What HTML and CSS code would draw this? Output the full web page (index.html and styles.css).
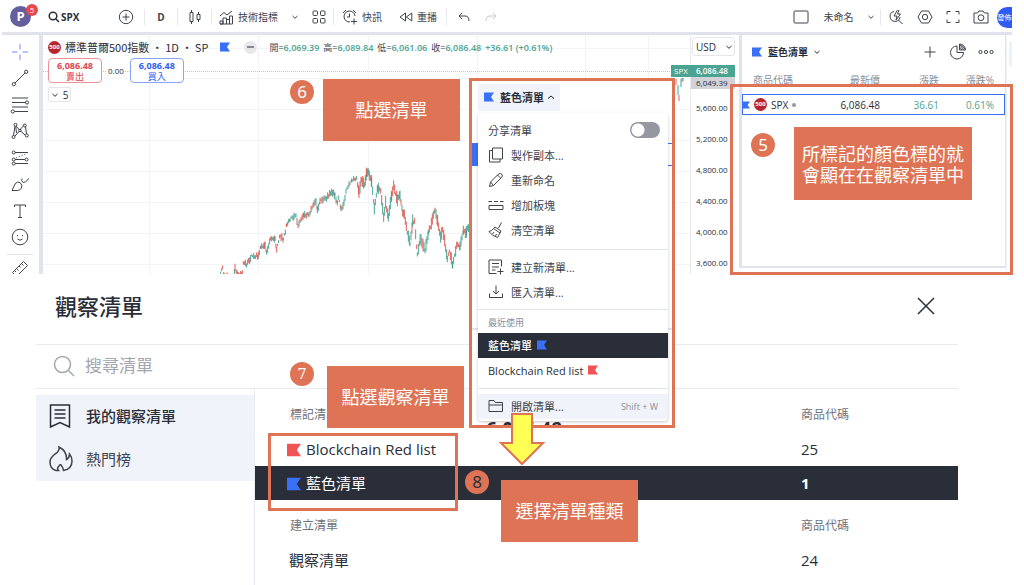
FILE: index.html
```html
<!DOCTYPE html>
<html lang="zh-Hant">
<head>
<meta charset="utf-8">
<title>觀察清單</title>
<link rel="stylesheet" href="styles.css">
</head>
<body>
<svg class="defs" aria-hidden="true">
  <symbol id="flag" viewBox="0 0 10 10"><path d="M0 0.500H10L7 5L10 9.500H0Z" fill="currentColor"/></symbol>
  <symbol id="down" viewBox="0 0 8 8"><path d="M1.500 3L4 5.300L6.500 3" class="ln"/></symbol>
</svg>
<main class="board">
  <section class="app">
    <header class="toolbar">
      <div class="profile"><span class="avatar">P</span><span class="badge">5</span></div>
      <button class="tool symbol"><svg width="12" height="12" viewBox="0 0 12 12"><circle cx="5" cy="5" r="3.800" class="ln bold"/><path d="M8 8L11 11" class="ln bold"/></svg>SPX</button>
      <button class="tool" aria-label="比較"><svg width="16" height="16" viewBox="0 0 16 16"><circle cx="8" cy="8" r="6.700" class="ln"/><path d="M8 4.500V11.500M4.500 8H11.500" class="ln"/></svg></button>
      <button class="tool split strong">D</button>
      <button class="tool split" aria-label="K線"><svg width="14" height="16" viewBox="0 0 14 16"><path d="M2 3.500H5V12.500H2ZM3.500 1V3.500M3.500 12.500V15M9 5.500H12V10.500H9ZM10.500 3V5.500M10.500 10.500V13" class="ln"/></svg></button>
      <button class="tool split"><svg width="15" height="15" viewBox="0 0 15 15"><path d="M1 6L5 2.500L8 5L13 1M1 14V11H4V14ZM4 14V8H7.500V14M7.500 14V9.500H10.500V14M10.500 14V6H13.500V14H1" class="ln"/></svg>技術指標</button>
      <button class="tool" aria-label="更多指標"><svg width="8" height="8"><use href="#down"/></svg></button>
      <button class="tool" aria-label="版面"><svg width="14" height="14" viewBox="0 0 14 14"><rect x="1" y="1" width="4.500" height="4.500" rx="1" class="ln"/><rect x="8.500" y="1" width="4.500" height="4.500" rx="1" class="ln"/><rect x="1" y="8.500" width="4.500" height="4.500" rx="1" class="ln"/><rect x="8.500" y="8.500" width="4.500" height="4.500" rx="1" class="ln"/></svg></button>
      <button class="tool split"><svg width="16" height="16" viewBox="0 0 16 16"><path d="M13 7A5.500 5.500 0 1 0 8 13M7.500 4.500V8H5M1 4L4 1M11 1L14 4M12 9.500V15.500M9 12.500H15" class="ln"/></svg>快訊</button>
      <button class="tool"><svg width="14" height="12" viewBox="0 0 14 12"><path d="M6.500 2V10L1 6ZM12.800 2V10L7.300 6Z" class="ln"/></svg>重播</button>
      <button class="tool split" aria-label="復原"><svg width="12" height="10" viewBox="0 0 12 10"><path d="M4 1L1 4L4 7M1 4H7Q11 4 11 9" class="ln"/></svg></button>
      <button class="tool faint" aria-label="重做"><svg width="12" height="10" viewBox="0 0 12 10"><path d="M8 1L11 4L8 7M11 4H5Q1 4 1 9" class="ln"/></svg></button>
      <span></span>
      <button class="tool" aria-label="佈局"><svg width="16" height="14" viewBox="0 0 16 14"><rect x="1" y="1" width="14" height="12" rx="1" class="ln"/></svg></button>
      <button class="tool">未命名</button>
      <button class="tool" aria-label="佈局選單"><svg width="8" height="8"><use href="#down"/></svg></button>
      <button class="tool split" aria-label="快速搜尋"><svg width="16" height="16" viewBox="0 0 16 16"><path d="M6 2.500A5 5 0 1 0 12 8M10.500 11L14.500 15M9.500 1L6 7H9L8 11L12.500 5H9.500L11 1" class="ln"/></svg></button>
      <button class="tool" aria-label="設定"><svg width="16" height="16" viewBox="0 0 16 16"><path d="M4.500 2H11.500L15 8L11.500 14H4.500L1 8Z" class="ln"/><circle cx="8" cy="8" r="2.700" class="ln"/></svg></button>
      <button class="tool" aria-label="全螢幕"><svg width="14" height="14" viewBox="0 0 14 14"><path d="M1 4.500V1.500H4.500M9.500 1.500H13V4.500M13 9.500V12.500H9.500M4.500 12.500H1V9.500" class="ln"/></svg></button>
      <button class="tool" aria-label="快照"><svg width="16" height="14" viewBox="0 0 16 14"><path d="M1 3H4.500L6 1H10L11.500 3H15V13H1Z" class="ln"/><circle cx="8" cy="7.700" r="2.900" class="ln"/></svg></button>
      <button class="publish">發佈</button>
    </header>

    <div class="workspace">
      <nav class="rail" aria-label="繪圖工具">
        <div class="rail-tools">
          <button class="tool cross" aria-label="十字"><svg width="18" height="18" viewBox="0 0 18 18"><path d="M9 1V6.500M9 11.500V17M1 9H6.500M11.500 9H17" class="ln"/></svg></button>
          <button class="tool" aria-label="趨勢線"><svg width="18" height="18" viewBox="0 0 18 18"><path d="M4 14L14 4" class="ln"/><circle cx="2.800" cy="15.200" r="1.600" class="ln"/><circle cx="15.200" cy="2.800" r="1.600" class="ln"/></svg></button>
          <button class="tool" aria-label="斐波那契"><svg width="20" height="18" viewBox="0 0 20 18"><path d="M2 2H18M2 6.500H15.500M2 11H18M4.500 15.500H18" class="ln"/><circle cx="17" cy="6.500" r="1.600" class="ln"/><circle cx="2.800" cy="15.500" r="1.600" class="ln"/></svg></button>
          <button class="tool" aria-label="型態"><svg width="18" height="18" viewBox="0 0 18 18"><path d="M2.500 13.500L4 4M5 4L8.500 8L13 3.500M4 14L8.500 9M9.500 9L14 13M14.500 4.500L15.500 12M4.800 5L5.500 11" class="ln"/><circle cx="4.500" cy="2.800" r="1.500" class="ln"/><circle cx="13.800" cy="3.500" r="1.500" class="ln"/><circle cx="2.500" cy="15" r="1.500" class="ln"/><circle cx="15.800" cy="13.500" r="1.500" class="ln"/><circle cx="9" cy="8.500" r="1.200" class="ln"/></svg></button>
          <button class="tool" aria-label="預測"><svg width="18" height="18" viewBox="0 0 18 18"><path d="M4 3.500H17M4 10.500H14M4 14.500H17" class="ln"/><path d="M5 9L15 5" class="ln dots"/><circle cx="2.700" cy="3.500" r="1.500" class="ln"/><circle cx="2.700" cy="10.500" r="1.500" class="ln"/><circle cx="15.500" cy="10.500" r="1.500" class="ln"/><circle cx="2.700" cy="14.500" r="1.500" class="ln"/></svg></button>
          <button class="tool" aria-label="筆刷"><svg width="20" height="18" viewBox="0 0 20 18"><path d="M2 15.500L5 9Q7 6 10 7.500Q13 10 11.500 13Q10 15.500 7.500 15.500ZM12 3.500Q11 6 13 7.500Q15 8 19 3.500" class="ln"/></svg></button>
          <button class="tool" aria-label="文字"><svg width="18" height="18" viewBox="0 0 18 18"><path d="M3.500 5V3H14.500V5M9 3V15.500M7 15.500H11" class="ln"/></svg></button>
          <button class="tool" aria-label="圖示"><svg width="18" height="18" viewBox="0 0 18 18"><circle cx="9" cy="9" r="7.800" class="ln"/><path d="M6.500 7V8.200M11.500 7V8.200M6.500 11Q9 13.500 11.500 11" class="ln"/></svg></button>
        </div>
        <button class="tool ruler" aria-label="測量"><svg width="18" height="18" viewBox="0 0 18 18"><path d="M1.500 12.500L12.500 1.500L16.500 5.500L5.500 16.500ZM10.500 3.500L12.500 5.500M8 6L9.500 7.500M5.500 8.500L7.500 10.500M3.500 10.500L5 12" class="ln"/></svg></button>
      </nav>

      <section class="chart">
        <svg class="plot" id="plot" aria-hidden="true"></svg>
        <div class="pane">
          <div class="legend">
            <span class="logo">500</span>
            <h1 class="instrument">標準普爾500指數 · 1D · SP</h1>
            <svg class="blue" width="10" height="10"><use href="#flag"/></svg>
            <span class="market"></span>
            <div class="ohlc">
              <span>開=<b>6,069.39</b></span><span>高=<b>6,089.84</b></span><span>低=<b>6,061.06</b></span><span>收=<b>6,086.48</b></span><b>+36.61 (+0.61%)</b>
            </div>
          </div>
          <div class="orders">
            <button class="order sell"><b>6,086.48</b><span>賣出</span></button>
            <span class="spread">0.00</span>
            <button class="order buy"><b>6,086.48</b><span>買入</span></button>
          </div>
          <button class="collapse"><svg width="8" height="8"><use href="#down"/></svg>5</button>
        </div>
        <div class="scale">
          <button class="currency">USD<svg width="8" height="8"><use href="#down"/></svg></button>
          <div class="last"><span class="ticker">SPX</span>6,086.48</div>
          <div class="prev">6,049.39</div>
          <ul class="ticks"><li>5,600.00</li><li>5,200.00</li><li>4,800.00</li><li>4,400.00</li><li>4,000.00</li><li>3,600.00</li></ul>
        </div>
      </section>

      <section class="watchlist">
        <header class="watch-head">
          <svg class="blue" width="10" height="10"><use href="#flag"/></svg>
          <button class="watch-name">藍色清單<svg width="8" height="8"><use href="#down"/></svg></button>
          <button class="tool" aria-label="新增"><svg width="12" height="12" viewBox="0 0 12 12"><path d="M6 0.500V11.500M0.500 6H11.500" class="ln"/></svg></button>
          <button class="tool" aria-label="分析"><svg width="18" height="18" viewBox="0 0 18 18"><path d="M8 3A6.500 6.500 0 1 0 14.500 9.500H8ZM10.500 1V7H16.500A6 6 0 0 0 10.500 1ZM10.500 4L13 7M12 1.500L16 6M11 2L15 7" class="ln"/></svg></button>
          <button class="tool" aria-label="更多"><svg width="16" height="6" viewBox="0 0 16 6"><circle cx="2.500" cy="3" r="1.600" class="ln"/><circle cx="8" cy="3" r="1.600" class="ln"/><circle cx="13.500" cy="3" r="1.600" class="ln"/></svg></button>
        </header>
        <table class="quotes">
          <thead><tr><th>商品代碼</th><th>最新價</th><th>漲跌</th><th>漲跌%</th></tr></thead>
          <tbody><tr><td><span class="sym"><svg class="blue" width="8" height="10"><use href="#flag"/></svg><span class="logo">500</span>SPX<i></i></span></td><td>6,086.48</td><td class="up">36.61</td><td class="up">0.61%</td></tr></tbody>
        </table>
      </section>
      <aside class="edge"><span></span></aside>
    </div>
  </section>

  <section class="dialog">
    <header class="dialog-head">
      <h2>觀察清單</h2>
      <button class="close" aria-label="關閉"><svg width="18" height="18" viewBox="0 0 18 18"><path d="M1 1L17 17M17 1L1 17" class="ln thick"/></svg></button>
    </header>
    <label class="search">
      <svg width="22" height="22" viewBox="0 0 22 22"><circle cx="9.500" cy="9.500" r="8" class="ln thick"/><path d="M15.500 15.500L21 21" class="ln thick"/></svg>
      <input type="text" placeholder="搜尋清單" aria-label="搜尋清單">
    </label>
    <div class="dialog-body">
      <nav class="sections">
        <a href="#mine" class="current"><svg width="22" height="24" viewBox="0 0 22 24"><path d="M1.500 1H20.500V23L11 18.500L1.500 23ZM5.500 6H16.500M5.500 10H16.500M5.500 14H16.500" class="ln mid"/></svg>我的觀察清單</a>
        <a href="#hot"><svg width="24" height="26" viewBox="0 0 24 26"><path d="M10 1Q11 5 6 8Q1 12 1 16Q1 23 7 24.500H9.500Q7.500 22 10 20Q11.500 18 12 19Q14 21 14.500 24.500Q23 23 23 15Q23 11 20.500 8Q20.500 12 17.500 13.500Q18 5 10 1Z" class="ln mid"/></svg>熱門榜</a>
      </nav>
      <table class="lists">
        <tbody>
          <tr class="group"><th>標記清單</th><th>商品代碼</th></tr>
          <tr><td><svg class="red" width="14" height="14"><use href="#flag"/></svg>Blockchain Red list</td><td>25</td></tr>
          <tr class="active"><td><svg class="blue" width="14" height="14"><use href="#flag"/></svg>藍色清單</td><td>1</td></tr>
          <tr class="group next"><th>建立清單</th><th>商品代碼</th></tr>
          <tr><td>觀察清單</td><td>24</td></tr>
        </tbody>
      </table>
    </div>
  </section>

  <div class="frame frame-watch"></div>
  <span class="step s5">5</span>
  <p class="note n5">所標記的顏色標的就會顯在在觀察清單中</p>
  <span class="step s6">6</span>
  <p class="note n6">點選清單</p>
  <span class="step s7">7</span>
  <p class="note n7">點選觀察清單</p>
  <div class="frame frame-list"></div>
  <span class="step s8">8</span>
  <p class="note n8">選擇清單種類</p>

  <section class="inset">
    <div class="under-row"></div>
    <div class="under-split"></div>
    <div class="under-price"><b>6,086.48</b><span>36.61 &nbsp;0</span></div>
    <button class="inset-name"><svg class="blue" width="10" height="10"><use href="#flag"/></svg>藍色清單<svg width="8" height="8" viewBox="0 0 8 8"><path d="M1 5.500L4 3L7 5.500" class="ln"/></svg></button>
    <div class="menu">
      <label class="item share">分享清單<input type="checkbox" class="switch"></label>
      <button class="item"><svg width="16" height="16" viewBox="0 0 16 16"><path d="M4.500 1H14.500V12H4.500ZM4.500 3.500H1.500V15H12V12" class="ln"/></svg>製作副本...</button>
      <button class="item"><svg width="16" height="16" viewBox="0 0 16 16"><path d="M1.500 14.500L2.500 10L10.500 2Q12.500 0.500 14 2.500Q15 4 13.500 5.500L5.500 13.500ZM9.500 3L12.500 6M2.500 10L5.500 13.500" class="ln"/></svg>重新命名</button>
      <button class="item"><svg width="16" height="16" viewBox="0 0 16 16"><path d="M0.500 4.500H4M6 4.500H10M12 4.500H15.500M1 8.500H15V12.500H1Z" class="ln"/></svg>增加板塊</button>
      <button class="item"><svg width="16" height="16" viewBox="0 0 16 16"><path d="M13.500 0.500L10.500 6M7 5L13 9L12 11L5.500 6.500ZM5.500 6.500Q4 9 1 9.500Q4 14 9.500 15.500Q11 13 12 11M6 10L4.500 12M8.500 12L7.500 14" class="ln"/></svg>清空清單</button>
      <hr>
      <button class="item"><svg width="16" height="16" viewBox="0 0 16 16"><path d="M13.500 7.500V1H1V14.500H8.500M4 4.500H11M4 8H11M4 11H7.500M12.500 9.500V15.500M9.500 12.500H15.500" class="ln"/></svg>建立新清單...</button>
      <button class="item"><svg width="16" height="16" viewBox="0 0 16 16"><path d="M8 1.500V10M5 7L8 10L11 7M1.500 9.500V13.500H14.500V9.500" class="ln"/></svg>匯入清單...</button>
      <hr class="tight">
      <h3>最近使用</h3>
      <button class="item chosen">藍色清單<svg class="blue" width="10" height="10"><use href="#flag"/></svg></button>
      <button class="item recent">Blockchain Red list<svg class="red" width="10" height="10"><use href="#flag"/></svg></button>
      <hr class="last-rule">
      <button class="item hover"><svg width="16" height="14" viewBox="0 0 16 14"><path d="M1 12.500V1.500H6L7.500 3.500H14.500V12.500ZM1 6H14.500" class="ln"/></svg>開啟清單...<kbd>Shift + W</kbd></button>
    </div>
  </section>
  <svg class="arrow" width="48" height="54" viewBox="0 0 48 54"><path d="M14 2H34V31H45L24 52L3 31H14Z" fill="#ffff54" stroke="#de7356" stroke-width="2"/></svg>
</main>
<script src="chart.js"></script>
</body>
</html>
```
FILE: styles.css
```css
* { box-sizing: border-box; }
:root { --ink: #40434c; --dark: #2a2e39; --band: #e0e3eb; --pale: #f0f3fa; --orange: #de7356; --blue: #3a6ff7; --red: #f05454; --green: #4ba391; }
body { margin: 0; background: #fff; color: var(--dark); font-family: "Open Sans", "Noto Sans CJK TC", sans-serif; font-size: 11px; }
button, input, kbd { font: inherit; color: inherit; }
button { border: 0; background: none; padding: 0; }
h1, h2, h3, p, ul { margin: 0; padding: 0; font-weight: 400; }
li { list-style: none; }
svg { flex: none; display: block; }
.defs { position: absolute; width: 0; height: 0; }
.ln { fill: none; stroke: currentColor; stroke-width: 1; }
.mid, .bold, .thick { stroke-width: 1.5; }
.dots { stroke-dasharray: 1 2; }
.blue { color: var(--blue); }
.red { color: var(--red); }
.board { position: relative; min-height: 100vh; overflow: hidden; }

.app { height: 274px; margin: 0 12px 0 2px; overflow: hidden; }
.toolbar { height: 35px; display: grid; grid-template-columns: 38px 68px 36px 33px 34px 74px 19px 29px 57px 56px 34px 22px 1fr 30px 45px 19px 31px 28px 27px 29px 17px; align-items: center; border-bottom: 3px solid var(--band); padding-top: 2px; }
.tool { display: flex; align-items: center; justify-content: center; gap: 4px; height: 16px; color: var(--ink); font-size: 10px; line-height: 16px; white-space: nowrap; }
.split { border-left: 1px solid #e6e8ee; }
.strong { font-weight: 700; }
.symbol { font-weight: 700; color: var(--dark); justify-content: flex-start; gap: 1px; padding-left: 8px; }
.faint { color: #c5c8d0; }
.profile { position: relative; height: 22px; padding-left: 8px; }
.avatar { display: block; width: 21px; height: 21px; border-radius: 50%; background: #635e9e; color: #fff; font: 700 13px/21px "Open Sans", sans-serif; text-align: center; }
.badge { position: absolute; left: 24px; top: -2px; width: 12px; height: 12px; border-radius: 50%; background: #e5484d; color: #fff; font-size: 8px; line-height: 12px; text-align: center; }
.publish { height: 21px; margin-left: 2px; border-radius: 11px 0 0 11px; background: #2f5bf5; color: #fff; font-size: 7px; }

.workspace { height: 239px; display: flex; }
.rail { width: 41px; border-right: 4px solid var(--band); padding-top: 6px; padding-right: 1px; }
.rail-tools { height: 208px; display: flex; flex-direction: column; justify-content: space-between; align-items: center; padding-bottom: 1px; margin-bottom: 5px; }
.rail-tools .tool { height: 22px; }
.cross { color: #6c8df5; }
.ruler { width: 26px; height: 28px; margin: 0 auto; border-top: 1px solid var(--band); }
.chart { position: relative; flex: 1; display: flex; min-width: 0; }
.plot { position: absolute; left: 0; top: 0; width: 100%; height: 100%; }
.pane { position: relative; flex: 1; min-width: 0; padding: 4px 0 0 5px; }
.legend { display: flex; align-items: center; height: 16px; white-space: nowrap; }
.logo { flex: none; width: 13px; height: 13px; border-radius: 50%; background: #b7252d; color: #fff; font-size: 6px; font-weight: 700; line-height: 13px; text-align: center; }
.instrument { margin: 0 12px 0 4px; font: 11px/16px "Noto Sans CJK TC", sans-serif; }
.market { width: 13px; height: 13px; margin: 0 12px 0 14px; border-radius: 50%; background: linear-gradient(#868993, #868993) center / 7px 2px no-repeat, #e8e8ea; }
.ohlc { display: flex; gap: 4px; font-size: 9px; color: var(--ink); }
.ohlc b { font-weight: 600; color: var(--green); }
.orders { display: flex; align-items: center; gap: 5px; margin-top: 3px; }
.order { display: flex; flex-direction: column; align-items: center; justify-content: center; width: 54px; height: 25px; border: 1px solid; border-radius: 4px; background: #fff; }
.order b { font: 700 9px/11px "Open Sans", sans-serif; }
.order span { font: 9px/11px "Noto Sans CJK TC", sans-serif; }
.sell { color: #e0444c; border-color: #ee9297; }
.buy { color: #2f61f5; border-color: #88a4fa; }
.spread { padding: 0 1px; background: #fff; font-size: 8px; }
.collapse { display: flex; align-items: center; justify-content: center; gap: 4px; width: 23px; height: 15px; margin-top: 4px; border: 1px solid #e4e6eb; border-radius: 2px; font-size: 10px; }
.scale { position: relative; width: 49px; padding-top: 2px; border-left: 1px solid #e8eaef; font-size: 8px; line-height: 12px; }
.currency { display: flex; align-items: center; justify-content: space-between; width: 43px; height: 19px; margin-left: 1px; padding: 0 1px 0 3px; border: 1px solid #e4e6eb; border-radius: 3px; background: #fff; font-size: 10px; }
.last { position: relative; width: 44px; height: 12px; margin-top: 9px; padding-left: 5px; background: var(--green); color: #fff; font-weight: 600; }
.ticker { position: absolute; right: 44px; top: 0; width: 20px; background: var(--green); text-align: center; font-weight: 400; }
.prev { width: 44px; height: 12px; padding-left: 5px; background: #d1d3d9; }
.ticks { padding: 3px 0 0 5px; }
.ticks li { height: 31px; line-height: 31px; }

.watchlist { width: 267px; border-left: 3px solid var(--band); border-right: 1px solid var(--band); height: 233px; border-bottom: 2px solid var(--band); }
.watch-head { display: grid; grid-template-columns: 16px 1fr 28px 28px 28px; align-items: center; height: 33px; padding: 0 5px 0 10px; }
.watch-name { display: flex; align-items: center; gap: 5px; font-size: 10px; font-weight: 700; }
.quotes { width: 100%; border-collapse: collapse; table-layout: fixed; }
.quotes th { height: 26px; padding: 0 0 4px; text-align: right; font-weight: 400; font-size: 10px; color: #8b8e98; }
.quotes th:first-child { width: 78px; text-align: left; padding-left: 11px; }
.quotes th:nth-child(2) { width: 60px; }
.quotes th:nth-child(3) { width: 59px; }
.quotes th:last-child, .quotes td:last-child { padding-right: 11px; }
.quotes tbody { outline: 1px solid var(--blue); outline-offset: -1px; }
.quotes td { height: 21px; padding: 0; text-align: right; font-size: 10px; }
.sym { display: flex; align-items: center; gap: 4px; }
.sym i { width: 4px; height: 4px; border-radius: 50%; background: #9598a1; }
.quotes .up { color: var(--green); font-weight: 500; }
.edge { width: 6px; border-left: 1px solid var(--pale); padding: 6px 0 0 2px; }
.edge span { display: block; height: 26px; background: #eaf1ff; border-radius: 3px 0 0 3px; }

.dialog { margin: 0 66px 0 36px; }
.dialog-head { height: 71px; padding: 0 23px 6px 19px; display: flex; align-items: center; justify-content: space-between; border-bottom: 1px solid #e9ebf1; }
.dialog-head h2 { font-size: 22px; line-height: 30px; font-weight: 500; }
.search { height: 44px; display: flex; align-items: center; gap: 10px; padding: 0 0 2px 17px; border-bottom: 1px solid #e9ebf1; color: #a3a6af; }
.search input { flex: 1; border: 0; padding: 0; outline: 0; font-size: 17px; }
.search input::placeholder { color: #a3a6af; opacity: 1; }
.dialog-body { display: flex; min-height: 196px; }
.sections { width: 219px; padding-top: 6px; border-right: 1px solid #e9ebf1; }
.sections a { display: grid; grid-template-columns: 24px 1fr; gap: 13px; align-items: center; justify-items: start; height: 43px; padding: 0 0 2px 13px; background: var(--pale); color: var(--ink); font-size: 15px; text-decoration: none; }
.sections .current { color: var(--dark); font-weight: 500; }
.lists { flex: 1; align-self: flex-start; border-collapse: collapse; margin-top: 9px; font-size: 15px; }
.lists th, .lists td { height: 34px; padding: 0 0 0 34px; text-align: left; font-weight: 400; line-height: 20px; }
.lists tr > :last-child { width: 157px; padding-left: 0; }
.lists th { font-size: 12px; color: #6f727c; }
.lists .group th:first-child { padding-left: 35px; }
.lists .next th { height: 43px; padding-top: 9px; }
.lists td svg { display: inline-block; vertical-align: -2px; margin: 0 5px 0 -2px; }
.active { background: var(--dark); color: #fff; }
.active td:last-child { font-weight: 700; }

.frame { position: absolute; border: 3px solid var(--orange); }
.frame-watch { left: 730px; top: 84px; width: 283px; height: 191px; }
.frame-list { left: 268px; top: 433px; width: 190px; height: 78px; }
.step { position: absolute; width: 24px; height: 24px; border-radius: 50%; background: var(--orange); color: #fff; font: 17px/24px "Noto Sans", sans-serif; text-align: center; }
.s5 { left: 751px; top: 133px; }
.s6 { left: 290px; top: 80px; }
.s7 { left: 290px; top: 362px; font-family: "DejaVu Serif", serif; font-size: 15px; }
.s8 { left: 465px; top: 470px; color: var(--dark); }
.note { position: absolute; width: 137px; height: 62px; display: flex; align-items: center; justify-content: center; padding-bottom: 1px; background: var(--orange); color: #fff; font: 400 18px/21px "Noto Sans CJK TC", sans-serif; }
.n5 { left: 794px; top: 127px; width: 178px; height: 73px; padding: 0 8px; }
.n6 { left: 323px; top: 79px; }
.n7 { left: 327px; top: 366px; }
.n8 { left: 501px; top: 480px; }

.inset { position: absolute; left: 469px; top: 78px; width: 206px; padding: 3px 4px 1px 6px; border: 3px solid var(--orange); background: #fff; overflow: hidden; }
.inset-name { display: flex; align-items: center; gap: 6px; height: 27px; padding: 0 5px 2px 6px; background: var(--pale); font-weight: 700; }
.inset-name svg:last-child { margin-left: -3px; }
.menu { position: relative; margin-top: 2px; padding: 5px 0 2px; border-radius: 4px; background: #fff; box-shadow: 0 1px 3px #2a2e3944; }
.item { display: flex; align-items: center; gap: 7px; width: 100%; height: 25px; padding: 0 10px 1px; color: var(--ink); text-align: left; white-space: nowrap; }
.share { justify-content: space-between; padding-right: 8px; padding-bottom: 2px; }
.switch { appearance: none; width: 30px; height: 16px; margin: 0; border-radius: 8px; background: radial-gradient(circle at 8px 8px, #fff 6px, #9598a1 7px); }
.menu hr { height: 1px; margin: 6px 0 5px; border: 0; background: var(--band); }
.menu .tight { margin: 4px 0 0; }
.menu .last-rule { margin: 5px 0; }
.menu h3 { height: 23px; padding: 2px 10px 0; font-size: 9px; line-height: 22px; color: #8b8e98; }
.chosen { background: var(--dark); color: #fff; gap: 5px; font-weight: 500; }
.recent { color: var(--dark); gap: 5px; }
.hover { background: var(--pale); }
.item kbd { margin-left: auto; font-size: 9px; color: #8b8e98; }
.inset { padding-bottom: 4px; }
.under-row { position: absolute; left: 0; right: -4px; top: 62px; height: 23px; border: 1px solid var(--blue); border-left-width: 6px; }
.under-split { position: absolute; left: 0; right: 0; top: 247px; height: 2px; background: var(--band); }
.under-price { position: absolute; left: 14px; right: 6px; bottom: -16px; height: 24px; display: flex; justify-content: space-between; font-size: 19px; line-height: 24px; }
.under-price span { font-size: 15px; font-weight: 600; color: var(--green); }
.arrow { position: absolute; left: 498px; top: 412px; }
```
FILE: chart.js
```js
const plot = document.getElementById('plot');
const NS = 'http://www.w3.org/2000/svg';
function path(d, stroke, width, dash) {
  const p = document.createElementNS(NS, 'path');
  p.setAttribute('d', d);
  p.setAttribute('stroke', stroke);
  p.setAttribute('stroke-width', width);
  p.setAttribute('fill', 'none');
  if (dash) p.setAttribute('stroke-dasharray', dash);
  plot.appendChild(p);
}
let grid = '';
for (const y of [13.5, 43.5, 74.5, 105.5, 136.5, 167.5, 198.5, 229.5]) grid += `M0 ${y}H647`;
for (const x of [106.5, 215.5, 325.5, 434.5, 542.5, 605.5]) grid += `M${x} 0V239`;
path(grid, '#f3f4f7', 1);
path('M0 36.5H647', '#a5d3ca', 1, '1 1');

// Turning points of the closing price, in thirds of a pixel.
const turns = [[32,365],[38,350],[42,380],[70,380],[75,355],[82,372],[97,372],[100,338],[110,345],[125,318],[145,318],[152,290],[165,283],[170,310],[182,262],[195,268],[200,300],[210,255],[220,270],[230,225],[240,207],[258,200],[264,225],[280,195],[297,192],[312,162],[318,158],[322,182],[330,152],[350,145],[365,124],[375,135],[382,162],[385,145],[393,175],[402,160],[408,125],[425,88],[440,84],[447,125],[455,87],[463,108],[470,66],[475,66],[485,95],[493,175],[503,115],[512,122],[521,200],[527,160],[535,200],[545,135],[551,105],[562,150],[570,135],[578,190],[583,190],[592,250],[600,280],[608,215],[614,212],[622,315],[630,265],[645,300],[655,250],[675,182],[683,215],[692,262],[698,235],[712,325],[718,300],[728,348],[740,285],[750,290],[760,245],[770,250],[775,230],[785,245]];
let seed = 7;
const rnd = () => (seed = (seed * 16807) % 2147483647) / 2147483647;
const marks = [];
for (let i = 1; i < turns.length; i++) {
  const [x0, y0] = turns[i - 1], [x1, y1] = turns[i];
  for (let x = x0; x < x1; x += 3) {
    const y = y0 + (y1 - y0) * (x - x0) / (x1 - x0);
    const size = (x > 440 ? 5 : 3) + rnd() * (x > 440 ? 14 : 8);
    const mid = y + (rnd() - 0.5) * 8;
    const rising = rnd() < (y1 < y0 ? 0.65 : 0.35);
    marks.push([`M${x / 3 + 167} ${(mid - size) / 3 + 115}V${(mid + size) / 3 + 115}`, rising]);
  }
}
for (const [d, rising] of marks) path(d, rising ? '#359b89' : '#dc5149', 0.9);
path('M633 44V50M636 60V66M639 43V47', '#e0635c', 1);
path('M635 50V60M638 44V52M640 43V46', '#3fa796', 1);
```
